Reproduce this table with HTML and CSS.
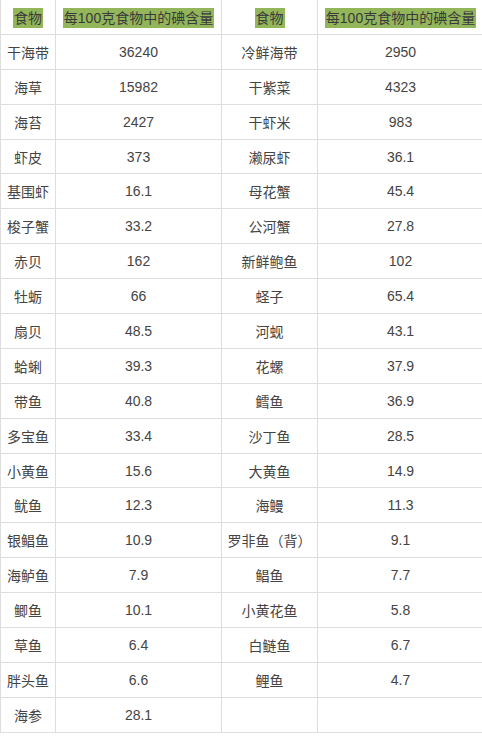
FILE: index.html
```html
<!DOCTYPE html>
<html lang="zh">
<head>
<meta charset="utf-8">
<link rel="stylesheet" href="styles.css">
</head>
<body>
<table class="iodine">
  <colgroup>
    <col class="c1"><col class="c2"><col class="c3"><col class="c4">
  </colgroup>
  <thead>
    <tr>
      <th><span class="hl">食物</span></th>
      <th><span class="hl">每100克食物中的碘含量</span></th>
      <th><span class="hl">食物</span></th>
      <th><span class="hl">每100克食物中的碘含量</span></th>
    </tr>
  </thead>
  <tbody>
    <tr><td>干海带</td><td>36240</td><td>冷鲜海带</td><td>2950</td></tr>
    <tr><td>海草</td><td>15982</td><td>干紫菜</td><td>4323</td></tr>
    <tr><td>海苔</td><td>2427</td><td>干虾米</td><td>983</td></tr>
    <tr><td>虾皮</td><td>373</td><td>濑尿虾</td><td>36.1</td></tr>
    <tr><td>基围虾</td><td>16.1</td><td>母花蟹</td><td>45.4</td></tr>
    <tr><td>梭子蟹</td><td>33.2</td><td>公河蟹</td><td>27.8</td></tr>
    <tr><td>赤贝</td><td>162</td><td>新鲜鲍鱼</td><td>102</td></tr>
    <tr><td>牡蛎</td><td>66</td><td>蛏子</td><td>65.4</td></tr>
    <tr><td>扇贝</td><td>48.5</td><td>河蚬</td><td>43.1</td></tr>
    <tr><td>蛤蜊</td><td>39.3</td><td>花螺</td><td>37.9</td></tr>
    <tr><td>带鱼</td><td>40.8</td><td>鳕鱼</td><td>36.9</td></tr>
    <tr><td>多宝鱼</td><td>33.4</td><td>沙丁鱼</td><td>28.5</td></tr>
    <tr><td>小黄鱼</td><td>15.6</td><td>大黄鱼</td><td>14.9</td></tr>
    <tr><td>鱿鱼</td><td>12.3</td><td>海鳗</td><td>11.3</td></tr>
    <tr><td>银鲳鱼</td><td>10.9</td><td>罗非鱼（背）</td><td>9.1</td></tr>
    <tr><td>海鲈鱼</td><td>7.9</td><td>鲳鱼</td><td>7.7</td></tr>
    <tr><td>鲫鱼</td><td>10.1</td><td>小黄花鱼</td><td>5.8</td></tr>
    <tr><td>草鱼</td><td>6.4</td><td>白鲢鱼</td><td>6.7</td></tr>
    <tr><td>胖头鱼</td><td>6.6</td><td>鲤鱼</td><td>4.7</td></tr>
    <tr><td>海参</td><td>28.1</td><td></td><td></td></tr>
  </tbody>
</table>
</body>
</html>
```
FILE: styles.css
```css
html, body {
  margin: 0;
  padding: 0;
  background: #ffffff;
}
body {
  font-family: "Liberation Sans", "Noto Sans CJK SC", sans-serif;
  font-size: 14px;
  color: #444444;
}
.iodine {
  border-collapse: collapse;
  table-layout: fixed;
  width: 483px;
  margin: -1px 0 0 0;
}
.c1 { width: 55px; }
.c2 { width: 166px; }
.c3 { width: 96px; }
.c4 { width: 166px; }
.iodine th,
.iodine td {
  border: 1px solid #dedede;
  height: 33.9px;
  padding: 0 4px;
  text-align: center;
  vertical-align: middle;
  font-weight: normal;
  white-space: nowrap;
}
.iodine th {
  color: #3a3a3a;
}
.hl {
  background: #94b65a;
  padding: 2px 1px;
}
```
